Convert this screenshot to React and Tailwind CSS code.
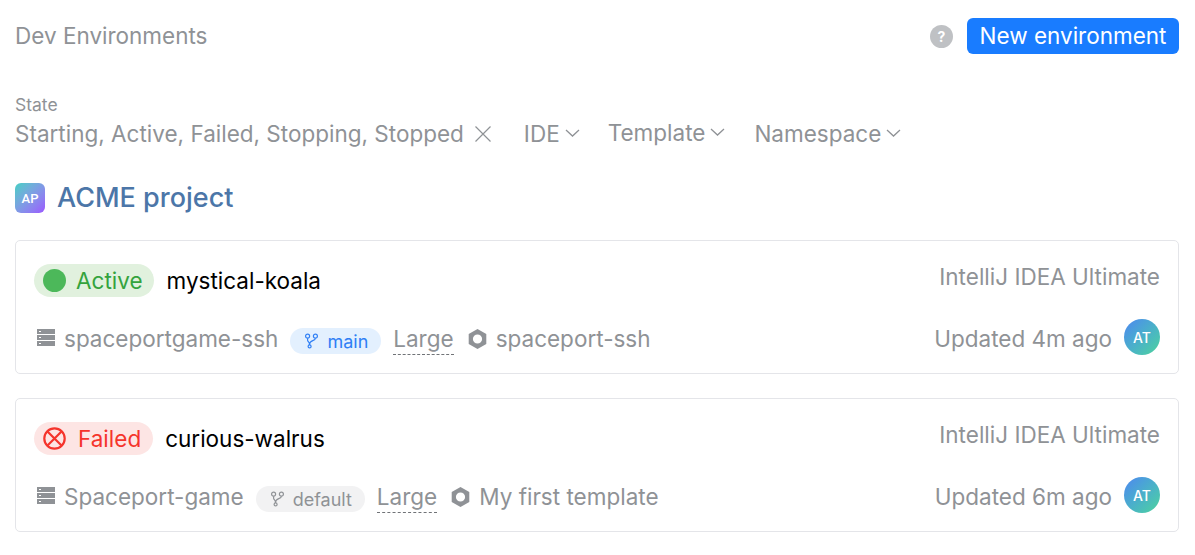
import React from 'react';

const ServerIcon = () => (
  <svg width="18" height="17" viewBox="0 0 18 17" className="shrink-0">
    <path fill="#8f9296" fillRule="evenodd" d="M0 0h18v5H0zM0 6h18v5H0zM0 12h18v5H0zM2 2v1h2V2zM2 8v1h2V8zM2 14v1h2v-1z" />
  </svg>
);

const BranchIcon = ({ color }) => (
  <svg width="13" height="16" viewBox="0 0 13 16" fill="none" stroke={color} strokeWidth="1.2" className="shrink-0">
    <circle cx="2.6" cy="3.2" r="2" />
    <circle cx="10.4" cy="3.2" r="2" />
    <circle cx="4.6" cy="13.4" r="1.5" />
    <path d="M2.6 5.2v2c0 1.6 2 1.6 2 4.7M10.4 5.2c0 3-5.8 1.8-5.8 5.7" />
  </svg>
);

const HexIcon = () => (
  <svg width="19" height="20" viewBox="0 0 19 20" className="shrink-0">
    <path fill="#8f9296" fillRule="evenodd" d="M9.5 0l8.8 5v10l-8.8 5-8.8-5V5zM9.5 5.4a4.6 4.6 0 1 0 0 9.2a4.6 4.6 0 1 0 0-9.2z" />
  </svg>
);

const FailedIcon = () => (
  <svg width="23" height="23" viewBox="0 0 23 23" fill="none" stroke="#f5342c" strokeWidth="2.2" className="shrink-0">
    <circle cx="11.5" cy="11.5" r="10.2" />
    <path d="M4.5 4.5l14 14M18.5 4.5l-14 14" />
  </svg>
);

const Chevron = () => (
  <svg width="15" height="8" viewBox="0 0 15 8" fill="none" stroke="#8f9296" strokeWidth="1.3" className="shrink-0 ml-[5px] mt-[-2px]">
    <path d="M1 1l6.5 6L14 1" />
  </svg>
);

const Filter = ({ label, gap }) => (
  <div className={`flex items-center text-[22.5px] leading-[28px] text-[#8f9296] ${gap}`}>
    <span>{label}</span>
    <Chevron />
  </div>
);

const EnvCard = ({ status, name, repo, branch, template, updated }) => {
  const active = status === 'Active';
  return (
    <div className="border border-[#e4e5e9] rounded-[5px] h-[134px] px-[18px] pt-[23px]">
      <div className="flex items-start justify-between">
        <div className="flex items-center">
          <div className={`flex items-center h-[33px] rounded-full pl-[9px] text-[22.5px] ${active ? 'pr-[11px] bg-[#e1f1de] text-[#34a33d]' : 'pr-[12px] bg-[#fde5e4] text-[#f5342c]'}`}>
            {active ? <span className="w-[23px] h-[23px] rounded-full bg-[#4cb85a]" /> : <FailedIcon />}
            <span className={active ? 'ml-[10px]' : 'ml-[12px]'}>{status}</span>
          </div>
          <span className={`text-[22.5px] text-black ${active ? 'ml-[13px]' : 'ml-[12px]'}`}>{name}</span>
        </div>
        <span className="text-[22.5px] leading-[26px] text-[#8f9296]">IntelliJ IDEA Ultimate</span>
      </div>
      <div className="flex items-center justify-between mt-[25px]">
        <div className="flex items-center pl-[3px] text-[22.5px] text-[#8f9296]">
          <span className="mt-[-3px]"><ServerIcon /></span>
          <span className="ml-[9px]">{repo}</span>
          <div className={`flex items-center h-[26px] rounded-full pl-[15px] pr-[13px] ml-[12px] mt-[4px] text-[18px] ${branch === 'main' ? 'bg-[#e3f0fe] text-[#2f7ff5]' : 'bg-[#f2f2f3] text-[#8f9296]'}`}>
            <BranchIcon color={branch === 'main' ? '#2f7ff5' : '#8f9296'} />
            <span className="ml-[9px]">{branch}</span>
          </div>
          <span className="ml-[12px] border-b border-dashed border-[#707377] leading-[31px]">Large</span>
          <span className="ml-[14px]"><HexIcon /></span>
          <span className="ml-[9px]">{template}</span>
        </div>
        <div className="flex items-center">
          <span className="text-[22.5px] text-[#8f9296]">{updated}</span>
          <div className="ml-[12px] mt-[-4px] w-[36px] h-[36px] rounded-full bg-linear-to-br from-[#4f85f0] to-[#4fd39a] flex items-center justify-center text-white text-[14px] font-medium">AT</div>
        </div>
      </div>
    </div>
  );
};

export default function App() {
  return (
    <div className="h-[555px] overflow-hidden bg-white pl-[15px] pr-[16px] font-['Inter',sans-serif]">
      <div className="flex items-center justify-between pt-[18px] h-[54px]">
        <span className="text-[22.5px] text-[#8f9296]">Dev Environments</span>
        <div className="flex items-center">
          <span className="w-[23px] h-[23px] rounded-full bg-[#bfc1c4] flex items-center justify-center text-white text-[14px] font-bold">?</span>
          <button className="ml-[14px] h-[36px] w-[212px] flex items-center justify-center rounded-[6px] bg-[#197cff] text-white text-[22.5px]">New environment</button>
        </div>
      </div>

      <div className="mt-[40px] text-[17.5px] leading-[22px] text-[#8f9296]">State</div>
      <div className="flex items-center h-[28px] mt-[4px]">
        <span className="text-[22.5px] text-[#8f9296]">Starting, Active, Failed, Stopping, Stopped</span>
        <svg width="16" height="16" viewBox="0 0 16 16" fill="none" stroke="#8f9296" strokeWidth="1.2" className="shrink-0 ml-[11px]">
          <path d="M0.5 0.5l15 15M15.5 0.5l-15 15" />
        </svg>
        <Filter label="IDE" gap="ml-[33px]" />
        <Filter label="Template" gap="ml-[28px] mt-[-2px]" />
        <Filter label="Namespace" gap="ml-[29px]" />
      </div>

      <div className="flex items-center mt-[30px]">
        <div className="w-[30px] h-[30px] rounded-[6px] bg-linear-to-br from-[#3fcfc4] to-[#9a55ff] flex items-center justify-center text-white text-[13px] font-medium font-['Roboto',sans-serif]">AP</div>
        <span className="ml-[12px] text-[27px] font-medium text-[#4c76a8]">ACME project</span>
      </div>

      <div className="mt-[21px] flex flex-col gap-[24px]">
        <EnvCard status="Active" name="mystical-koala" repo="spaceportgame-ssh" branch="main" template="spaceport-ssh" updated="Updated 4m ago" />
        <EnvCard status="Failed" name="curious-walrus" repo="Spaceport-game" branch="default" template="My first template" updated="Updated 6m ago" />
      </div>
    </div>
  );
}
